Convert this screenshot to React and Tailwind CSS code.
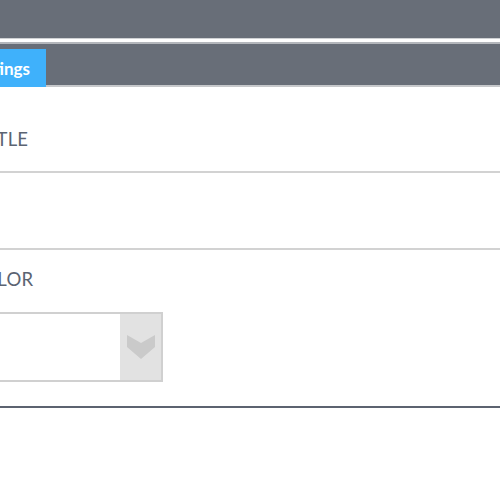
export default function App() {
  return (
    <div className="w-[500px] h-[500px] overflow-hidden bg-white" style={{ fontFamily: "Lato, 'Open Sans', sans-serif" }}>
      <div className="h-[38px] bg-[#686e78]" />
      <div className="h-px bg-[#cfd1d4]" />
      <div className="h-[3px] bg-white" />
      <div className="h-[2px] bg-[#b4b7bc]" />
      <div className="relative h-[41px] bg-[#686e78] border-b-2 border-[#c6c8cb] box-content">
        <div className="absolute left-0 top-[5px] h-[38px] w-[46px] overflow-hidden">
          <div className="flex h-full w-[120px] -ml-[74px] items-center justify-end bg-[#3fb1fb] pr-[16px] pt-[1px]">
            <span className="text-[17px] font-bold text-white leading-none">Settings</span>
          </div>
        </div>
      </div>
      <div className="pt-[42px] pb-[21px] border-b-2 border-[#d2d2d2] overflow-hidden">
        <div className="-ml-[20px] text-[18.5px] leading-[21px] tracking-[0.2px] text-[#5b6472] whitespace-nowrap">TITLE</div>
      </div>
      <div className="h-[77px] border-b-2 border-[#d2d2d2]" />
      <div className="pt-[19px] pb-[24px] border-b-2 border-[#5c6370] overflow-hidden">
        <div className="-ml-[30px] text-[18.5px] leading-[21px] tracking-[0.2px] text-[#5b6472] whitespace-nowrap">COLOR</div>
        <div className="mt-[22px] flex h-[70px] w-[163px] border-2 border-l-0 border-[#d0d0d0]">
          <div className="flex-1 bg-white" />
          <div className="flex w-[41px] items-center justify-center bg-[#e2e2e2]">
            <svg width="28" height="24" viewBox="0 0 28 24">
              <polygon points="0,0 14,8 28,0 28,12 14,24 0,12" fill="#cacaca" />
            </svg>
          </div>
        </div>
      </div>
    </div>
  );
}
